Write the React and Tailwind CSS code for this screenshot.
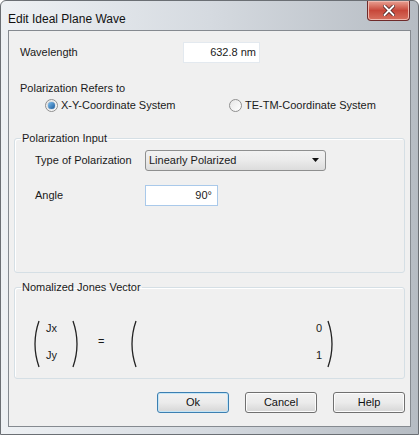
import React from 'react';

// Small bracket drawn as a curve, used for the Jones vector
const Paren = ({ right = false, height = 50 }) => (
  <svg width="10" height={height} viewBox={`0 0 10 ${height}`} className="block">
    {right ? (
      <path d={`M2 1 Q10 ${height / 2} 2 ${height - 1}`} fill="none" stroke="#222" strokeWidth="1.3" />
    ) : (
      <path d={`M8 1 Q0 ${height / 2} 8 ${height - 1}`} fill="none" stroke="#222" strokeWidth="1.3" />
    )}
  </svg>
);

const Radio = ({ checked }) => (
  <span className="relative inline-flex h-[13px] w-[13px] items-center justify-center rounded-full border border-[#8f8f8f] bg-gradient-to-br from-[#e6e6e6] to-[#ffffff]">
    {checked && <span className="h-[7px] w-[7px] rounded-full bg-gradient-to-br from-[#7fc2f2] to-[#1a5a9a] shadow-[0_0_1px_#0a3a6a]" />}
  </span>
);

const WinButton = ({ children, isDefault }) => (
  <button
    className={`h-[21px] w-[72px] rounded-[3px] border bg-gradient-to-b from-[#f2f2f2] via-[#ebebeb] to-[#d6d6d6] text-[11px] text-[#111] ${
      isDefault ? 'border-[#3c7fb1] shadow-[inset_0_0_0_1px_#c4e5f6]' : 'border-[#707070] shadow-[inset_0_0_0_1px_#fcfcfc]'
    }`}
  >
    {children}
  </button>
);

const App = () => {
  return (
    <div className="w-[419px] h-[435px] overflow-hidden" style={{ fontFamily: '"Liberation Sans", Arial, sans-serif' }}>
      <div className="flex h-full flex-col rounded-t-[6px] border border-[#6b6f74] bg-gradient-to-r from-[#eef1f4] via-[#d5dae0] to-[#b6bcc3] px-[7px] pb-[7px]">
        {/* Title bar */}
        <div className="flex h-[29px] items-start justify-between">
          <span className="pt-[9px] text-[12px] text-[#111]">Edit Ideal Plane Wave</span>
          <div className="mr-[1px] flex h-[20px] w-[43px] items-center justify-center rounded-b-[4px] border border-t-0 border-[#6e2a2a] bg-gradient-to-b from-[#e8a093] via-[#c7473a] to-[#d7705f] shadow-[inset_0_0_0_1px_#f0b8ae]">
            <svg width="12" height="11" viewBox="0 0 12 11">
              <path d="M1.5 1 L10.5 10 M10.5 1 L1.5 10" stroke="#3b1414" strokeWidth="3.4" strokeLinecap="round" />
              <path d="M1.5 1 L10.5 10 M10.5 1 L1.5 10" stroke="#ffffff" strokeWidth="2" strokeLinecap="round" />
            </svg>
          </div>
        </div>

        {/* Client area */}
        <div className="flex flex-1 flex-col border border-[#858a90] bg-[#f0f0f0] text-[11px] text-[#1a1a1a]">
          <div className="mt-[11px] flex items-center">
            <span className="w-[174px] pl-[11px]">Wavelength</span>
            <div className="flex h-[21px] w-[77px] items-center justify-end border border-[#e3e9ef] bg-white pr-[3px]">632.8 nm</div>
          </div>

          <div className="mt-[18px] pl-[11px] leading-[14px]">Polarization Refers to</div>
          <div className="mt-[3px] flex items-center leading-[14px]">
            <label className="ml-[36px] flex w-[184px] items-center gap-[3px]">
              <Radio checked />
              <span>X-Y-Coordinate System</span>
            </label>
            <label className="flex items-center gap-[3px]">
              <Radio />
              <span>TE-TM-Coordinate System</span>
            </label>
          </div>

          {/* Polarization Input group */}
          <fieldset className="mx-[5px] mt-[18px] h-[143px] rounded-[3px] border border-[#d5dfe5] px-[20px] shadow-[inset_1px_1px_0_#ffffff]">
            <legend className="ml-[-14px] px-[1px]">Polarization Input</legend>
            <div className="mt-[3px] flex items-center">
              <span className="w-[110px]">Type of Polarization</span>
              <div className="flex h-[21px] w-[181px] items-center justify-between rounded-[3px] border border-[#8e8f8f] bg-gradient-to-b from-[#f2f2f2] via-[#ebebeb] to-[#dcdcdc] pl-[3px] pr-[6px]">
                <span>Linearly Polarized</span>
                <svg width="7" height="4" viewBox="0 0 7 4">
                  <path d="M0 0 L7 0 L3.5 4 Z" fill="#111" />
                </svg>
              </div>
            </div>
            <div className="mt-[14px] flex items-center">
              <span className="w-[110px]">Angle</span>
              <div className="flex h-[21px] w-[73px] items-center justify-end border border-[#a9c9ea] bg-white pr-[5px]">90°</div>
            </div>
          </fieldset>

          {/* Jones vector group */}
          <fieldset className="mx-[5px] mt-[6px] h-[100px] rounded-[3px] border border-[#d5dfe5] shadow-[inset_1px_1px_0_#ffffff]">
            <legend className="ml-[6px] px-[1px]">Nomalized Jones Vector</legend>
            <div className="mt-[24px] flex items-center">
              <div className="ml-[16px]">
                <Paren height={48} />
              </div>
              <div className="ml-[5px] mt-[-4px] flex w-[25px] flex-col gap-[13px] leading-[14px]">
                <span>Jx</span>
                <span>Jy</span>
              </div>
              <Paren right height={48} />
              <span className="ml-[17px] mt-[-4px] w-[30px]">=</span>
              <Paren height={48} />
              <div className="ml-[174px] mt-[-4px] flex w-[10px] flex-col items-end gap-[13px] leading-[14px]">
                <span>0</span>
                <span>1</span>
              </div>
              <div className="ml-[4px]">
                <Paren right height={48} />
              </div>
            </div>
          </fieldset>

          {/* Buttons */}
          <div className="mt-[13px] flex justify-end gap-[16px] pr-[5px]">
            <WinButton isDefault>Ok</WinButton>
            <WinButton>Cancel</WinButton>
            <WinButton>Help</WinButton>
          </div>
        </div>
      </div>
    </div>
  );
};

export default App;
